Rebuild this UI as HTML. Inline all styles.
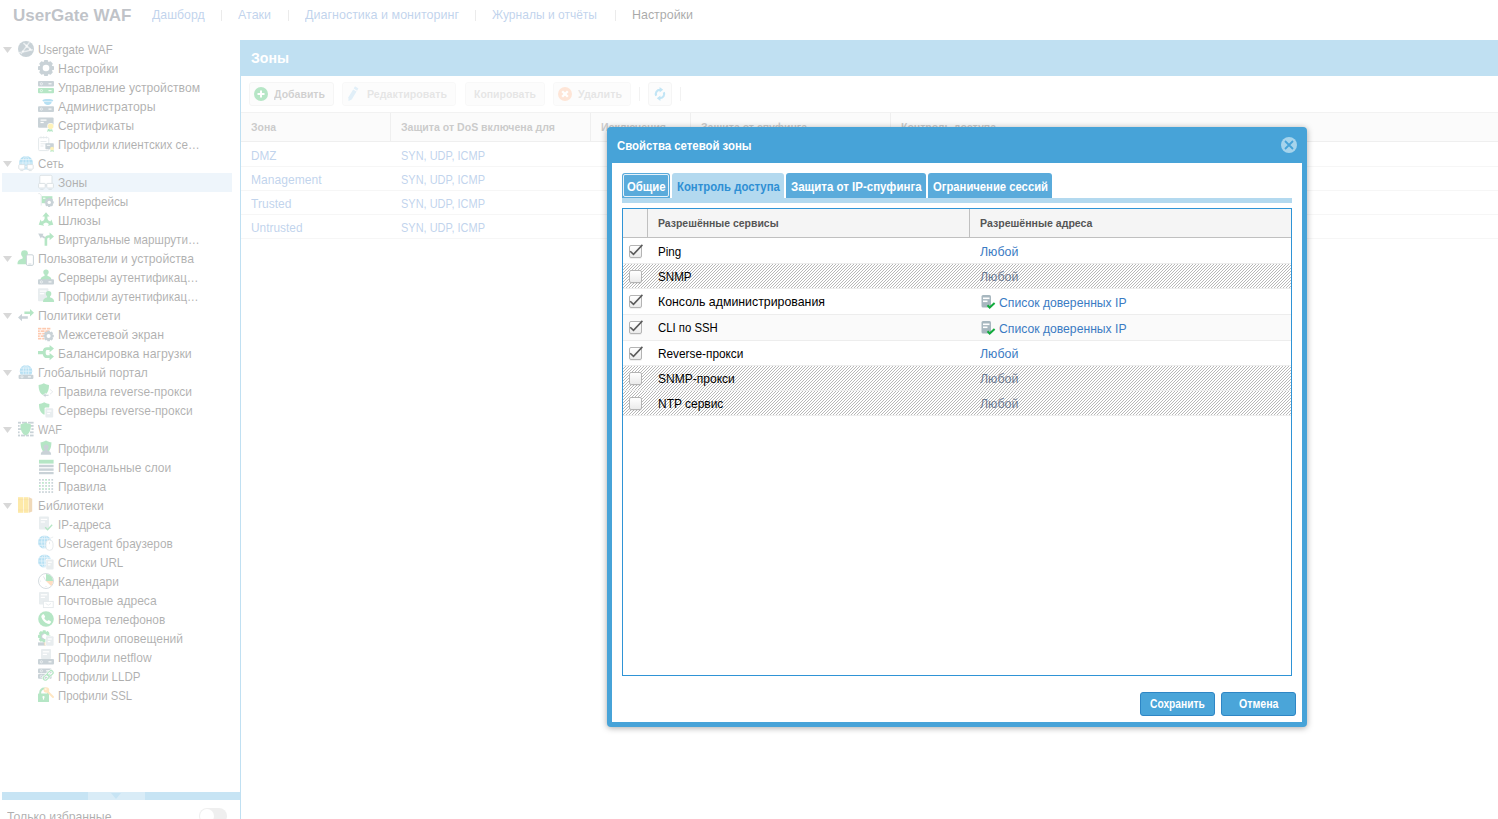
<!DOCTYPE html>
<html lang="ru"><head><meta charset="utf-8"><title>UserGate WAF</title>
<style>
html,body{margin:0;padding:0;background:#fff;overflow:hidden}
body{width:1498px;height:819px;position:relative;font-family:"Liberation Sans",sans-serif}
#app,#win{position:absolute;left:0;top:0;width:1498px;height:819px;overflow:hidden}
#mask{position:absolute;left:0;top:0;width:1498px;height:819px;background:rgba(255,255,255,.66)}
.t{position:absolute;transform-origin:0 0;white-space:pre;line-height:20px;height:20px;display:block;font-family:"Liberation Sans",sans-serif}
.b{position:absolute;box-sizing:border-box}
svg{position:absolute;overflow:visible}

</style></head>
<body>
<div id="app">
<div class="b" style="left:221px;top:10px;width:1px;height:11px;background:#c4c4c4"></div><div class="b" style="left:288px;top:10px;width:1px;height:11px;background:#c4c4c4"></div><div class="b" style="left:475px;top:10px;width:1px;height:11px;background:#c4c4c4"></div><div class="b" style="left:615px;top:10px;width:1px;height:11px;background:#c4c4c4"></div><svg style="left:3px;top:47px" width="9" height="6" viewBox="0 0 9 6"><path d="M0 0h9L4.5 6z" fill="#8c8c8c"/></svg><svg style="left:18px;top:41px" width="16" height="16" viewBox="0 0 16 16"><circle cx="8" cy="8" r="8" fill="#607d8b"/><g stroke="#fff" stroke-width="1.4" opacity=".62" fill="none" stroke-linecap="round"><path d="M11.2 1.600L3.200 12.600M5.800 2.400L13.800 9.400M1.600 11.400C6 10.800 10 10 14.200 8.600"/></g><g fill="#fff" opacity=".75"><circle cx="8.600" cy="5" r="1.200"/><circle cx="12" cy="8.600" r="1.100"/><circle cx="4.800" cy="10.600" r="1.100"/></g></svg><svg style="left:38px;top:60px" width="16" height="16" viewBox="0 0 16 16"><g fill="#607d8b"><rect x="5.92" y="0.00" width="4.16" height="3.72" rx="0.88" transform="rotate(0.0 8 8)"/><rect x="5.92" y="0.00" width="4.16" height="3.72" rx="0.88" transform="rotate(45.0 8 8)"/><rect x="5.92" y="0.00" width="4.16" height="3.72" rx="0.88" transform="rotate(90.0 8 8)"/><rect x="5.92" y="0.00" width="4.16" height="3.72" rx="0.88" transform="rotate(135.0 8 8)"/><rect x="5.92" y="0.00" width="4.16" height="3.72" rx="0.88" transform="rotate(180.0 8 8)"/><rect x="5.92" y="0.00" width="4.16" height="3.72" rx="0.88" transform="rotate(225.0 8 8)"/><rect x="5.92" y="0.00" width="4.16" height="3.72" rx="0.88" transform="rotate(270.0 8 8)"/><rect x="5.92" y="0.00" width="4.16" height="3.72" rx="0.88" transform="rotate(315.0 8 8)"/><circle cx="8" cy="8" r="6.64"/></g><circle cx="8" cy="8" r="3.30" fill="#fff"/></svg><svg style="left:38px;top:79px" width="16" height="16" viewBox="0 0 16 16"><rect x="0" y="2" width="16" height="5.6" rx="1" fill="#607d8b"/><circle cx="3.4" cy="4.8" r="1.1" fill="none" stroke="#fff" stroke-width=".7" opacity=".8"/><rect x="10.5" y="4.2" width="3" height="1.2" fill="#fff" opacity=".85"/><rect x="0" y="8.9" width="16" height="5.4" rx="1" fill="#27b655"/><circle cx="3.4" cy="11.600000000000001" r="1.1" fill="none" stroke="#fff" stroke-width=".7" opacity=".8"/><rect x="10.5" y="11.000000000000002" width="3" height="1.2" fill="#fff" opacity=".85"/></svg><svg style="left:38px;top:98px" width="16" height="16" viewBox="0 0 16 16"><path d="M4.3 2.2C6 0.6 13.6 0.6 15.3 2.2L14.4 3.6H5.2z" fill="#29a3dc"/><path d="M6 3.9h7.6c0 1.6-1.4 3-3.8 3s-3.8-1.4-3.8-3z" fill="#29a3dc"/><rect x="0" y="8.3" width="16" height="5.6" rx="1" fill="#607d8b"/><circle cx="3.4" cy="11.100000000000001" r="1.1" fill="none" stroke="#fff" stroke-width=".7" opacity=".8"/><rect x="10.5" y="10.500000000000002" width="3" height="1.2" fill="#fff" opacity=".85"/></svg><svg style="left:38px;top:117px" width="16" height="16" viewBox="0 0 16 16"><rect x="0" y="0.4" width="15.6" height="10.4" rx="1" fill="#607d8b"/><rect x="2.5" y="2.5" width="6" height="1.2" fill="#fff"/><rect x="2.5" y="4.9" width="3.2" height="1.2" fill="#fff"/><path d="M10.2 11l-1.200 4 2-1 1 .9.800-.9 2.200 1-1.200-4z" fill="#27b655"/><circle cx="12.6" cy="9.3" r="3.3" fill="#fff"/><circle cx="12.6" cy="9.3" r="2.8" fill="#fdd835"/></svg><svg style="left:38px;top:136px" width="16" height="16" viewBox="0 0 16 16"><rect x="0.6" y="1.6" width="10.2" height="13" rx="1" fill="#fff" stroke="#b0bec5" stroke-width="1"/><path d="M3 0.4v2M5.7 0.4v2M8.4 0.4v2" stroke="#b0bec5" stroke-width="1"/><path d="M2.5 5.5h6M2.5 7.8h6M2.5 10h3" stroke="#b0bec5" stroke-width=".9"/><rect x="7.4" y="7.3" width="8.4" height="6" rx=".8" fill="#607d8b"/><rect x="8.8" y="8.8" width="3.4" height=".9" fill="#fff"/><path d="M12.8 13.5l-.5 2.5 1.8-.7 1.8.7-.5-2.5z" fill="#27b655"/><circle cx="14.1" cy="12.6" r="1.9" fill="#fdd835"/></svg><svg style="left:3px;top:161px" width="9" height="6" viewBox="0 0 9 6"><path d="M0 0h9L4.5 6z" fill="#8c8c8c"/></svg><svg style="left:18px;top:155px" width="16" height="16" viewBox="0 0 16 16"><circle cx="8" cy="8" r="7" fill="#29a3dc"/><g stroke="#fff" stroke-width=".7" fill="none" opacity=".75"><ellipse cx="8" cy="8" rx="3.15" ry="7"/><path d="M8 1v14M1 8h14M1.91 4.50h12.18M1.91 11.50h12.18"/></g><rect x="0.8" y="9.6" width="6" height="4.6" rx=".8" fill="#fff" stroke="#90a4ae" stroke-width="0.9"/><path d="M2.30 15.6h3.00" stroke="#90a4ae" stroke-width="0.9"/><rect x="9.2" y="9.6" width="6" height="4.6" rx=".8" fill="#fff" stroke="#90a4ae" stroke-width="0.9"/><path d="M10.70 15.6h3.00" stroke="#90a4ae" stroke-width="0.9"/></svg><div class="b" style="left:2px;top:173px;width:230px;height:19px;background:#cde2f3"></div><svg style="left:38px;top:174px" width="16" height="16" viewBox="0 0 16 16"><rect x="1.8" y="1.3" width="12.2" height="9" rx="1.2" fill="#fff" stroke="#90a4ae" stroke-width=".9"/><rect x="0.6" y="9.4" width="6.6" height="4.6" rx=".8" fill="#fff" stroke="#90a4ae" stroke-width="0.9"/><path d="M2.25 15.4h3.30" stroke="#90a4ae" stroke-width="0.9"/><rect x="8.8" y="9.4" width="6.6" height="4.6" rx=".8" fill="#fff" stroke="#90a4ae" stroke-width="0.9"/><path d="M10.45 15.4h3.30" stroke="#90a4ae" stroke-width="0.9"/><path d="M7.2 11.7h1.6" stroke="#90a4ae" stroke-width=".9"/></svg><svg style="left:38px;top:193px" width="16" height="16" viewBox="0 0 16 16"><path d="M0.3 0.6h1.6l1.3 1.6v10.4" fill="none" stroke="#b0bec5" stroke-width=".9"/><rect x="3.8" y="3.2" width="10.6" height="7" fill="#27b655"/><rect x="5" y="4.6" width="2.4" height="1.4" fill="#fff" opacity=".7"/><g fill="#607d8b"><rect x="10.00" y="4.80" width="2.39" height="2.56" rx="0.51" transform="rotate(0.0 11.2 9.4)"/><rect x="10.00" y="4.80" width="2.39" height="2.56" rx="0.51" transform="rotate(45.0 11.2 9.4)"/><rect x="10.00" y="4.80" width="2.39" height="2.56" rx="0.51" transform="rotate(90.0 11.2 9.4)"/><rect x="10.00" y="4.80" width="2.39" height="2.56" rx="0.51" transform="rotate(135.0 11.2 9.4)"/><rect x="10.00" y="4.80" width="2.39" height="2.56" rx="0.51" transform="rotate(180.0 11.2 9.4)"/><rect x="10.00" y="4.80" width="2.39" height="2.56" rx="0.51" transform="rotate(225.0 11.2 9.4)"/><rect x="10.00" y="4.80" width="2.39" height="2.56" rx="0.51" transform="rotate(270.0 11.2 9.4)"/><rect x="10.00" y="4.80" width="2.39" height="2.56" rx="0.51" transform="rotate(315.0 11.2 9.4)"/><circle cx="11.2" cy="9.4" r="3.82"/></g><circle cx="11.2" cy="9.4" r="1.70" fill="#fff"/></svg><svg style="left:38px;top:212px" width="16" height="16" viewBox="0 0 16 16"><g fill="#27b655"><path d="M8 0.200l3.600 4.200h-2.200v4.400h-2.800V4.400H4.400z"/><g transform="rotate(120 8 8.600)"><path d="M8 0.200l3.600 4.200h-2.200v4.400h-2.800V4.400H4.400z"/></g><g transform="rotate(240 8 8.600)"><path d="M8 0.200l3.600 4.200h-2.200v4.400h-2.800V4.400H4.400z"/></g><circle cx="8" cy="8.600" r="2"/></g></svg><svg style="left:38px;top:231px" width="16" height="16" viewBox="0 0 16 16"><path d="M6.600 14.800V8.400c0-2.600 1.600-4.200 4.200-4.200h.800V1.600l4.400 3.800-4.400 3.800V6.800h-.800c-1.100 0-1.600.5-1.600 1.600v6.400z" fill="#27b655"/><path d="M6.400 7.800L3.800 6l-1 1.500L.2 2.600l5.400.200-1 1.500 2.800 1.900z" fill="#607d8b"/></svg><svg style="left:3px;top:256px" width="9" height="6" viewBox="0 0 9 6"><path d="M0 0h9L4.5 6z" fill="#8c8c8c"/></svg><svg style="left:18px;top:250px" width="16" height="16" viewBox="0 0 16 16"><circle cx="6.5" cy="3.6999999999999997" r="3.4" fill="#27b655"/><path d="M4.63 6.08h3.74v2.38c4.42 1.02 5.10 3.06 5.10 5.78h-13.94c0 -2.72 0.68 -4.76 5.10 -5.78z" fill="#27b655"/><rect x="8.4" y="4.8" width="7" height="10.6" rx="1.3" fill="#fff" stroke="#607d8b" stroke-width="1"/><path d="M10.4 14h3" stroke="#607d8b" stroke-width=".8"/></svg><svg style="left:38px;top:269px" width="16" height="16" viewBox="0 0 16 16"><circle cx="8" cy="3.1" r="2.7" fill="#27b655"/><path d="M6.51 4.99h2.97v1.89c3.51 0.81 4.05 2.43 4.05 4.59h-11.07c0 -2.16 0.54 -3.78 4.05 -4.59z" fill="#27b655"/><rect x="0" y="10.2" width="16" height="5.4" rx="1" fill="#607d8b"/><circle cx="3.4" cy="12.899999999999999" r="1.1" fill="none" stroke="#fff" stroke-width=".7" opacity=".8"/><rect x="10.5" y="12.299999999999999" width="3" height="1.2" fill="#fff" opacity=".85"/></svg><svg style="left:38px;top:288px" width="16" height="16" viewBox="0 0 16 16"><rect x="0" y="0.3" width="10.4" height="13" rx="1" fill="#bcc9cf"/><rect x="1.8" y="2.5" width="6.800000000000001" height="1.2" fill="#fff"/><rect x="1.8" y="5.1" width="4.42" height="1.2" fill="#fff"/><circle cx="10.6" cy="5.7" r="2.7" fill="#27b655"/><path d="M9.11 7.59h2.97v1.89c3.51 0.81 4.05 2.43 4.05 4.59h-11.07c0 -2.16 0.54 -3.78 4.05 -4.59z" fill="#27b655"/></svg><svg style="left:3px;top:313px" width="9" height="6" viewBox="0 0 9 6"><path d="M0 0h9L4.5 6z" fill="#8c8c8c"/></svg><svg style="left:18px;top:307px" width="16" height="16" viewBox="0 0 16 16"><path d="M6.400 4.400h5.600V2l4 3.700-4 3.700V7H6.400z" fill="#27b655"/><path d="M9.800 9.200H4V6.800L0 10.500l4 3.700v-2.400h5.800z" fill="#607d8b"/></svg><svg style="left:38px;top:326px" width="16" height="16" viewBox="0 0 16 16"><g fill="#f9631a" transform="translate(0 1.2)"><rect x="0" y="0.6" width="3.4" height="1.7"/><rect x="4.2" y="0.6" width="4" height="1.7"/><rect x="9" y="0.6" width="3.4" height="1.7"/><rect x="0" y="3.1" width="1.8" height="1.7"/><rect x="2.6" y="3.1" width="4" height="1.7"/><rect x="7.4" y="3.1" width="4" height="1.7"/><rect x="0" y="5.6" width="3.4" height="1.7"/><rect x="4.2" y="5.6" width="3" height="1.7"/><rect x="0" y="8.1" width="1.8" height="1.7"/><rect x="2.6" y="8.1" width="3" height="1.7"/><rect x="0" y="10.6" width="3.4" height="1.7"/><rect x="4.2" y="10.6" width="2" height="1.7"/></g><g fill="#607d8b"><rect x="9.25" y="4.80" width="2.70" height="2.77" rx="0.57" transform="rotate(0.0 10.6 10)"/><rect x="9.25" y="4.80" width="2.70" height="2.77" rx="0.57" transform="rotate(45.0 10.6 10)"/><rect x="9.25" y="4.80" width="2.70" height="2.77" rx="0.57" transform="rotate(90.0 10.6 10)"/><rect x="9.25" y="4.80" width="2.70" height="2.77" rx="0.57" transform="rotate(135.0 10.6 10)"/><rect x="9.25" y="4.80" width="2.70" height="2.77" rx="0.57" transform="rotate(180.0 10.6 10)"/><rect x="9.25" y="4.80" width="2.70" height="2.77" rx="0.57" transform="rotate(225.0 10.6 10)"/><rect x="9.25" y="4.80" width="2.70" height="2.77" rx="0.57" transform="rotate(270.0 10.6 10)"/><rect x="9.25" y="4.80" width="2.70" height="2.77" rx="0.57" transform="rotate(315.0 10.6 10)"/><circle cx="10.6" cy="10" r="4.32"/></g><circle cx="10.6" cy="10" r="2.00" fill="#fff"/></svg><svg style="left:38px;top:345px" width="16" height="16" viewBox="0 0 16 16"><path d="M0 6h4.800C5.200 3 6.800 2.200 9 2.200h2.600V0l4.400 3.600-4.400 3.600V5H9.200c-.9 0-1.500.6-1.500 2.600s.6 2.600 1.500 2.600h2.400V8l4.400 3.600-4.400 3.600V13H9c-2.200 0-3.800-.8-4.200-3.800H0z" fill="#27b655"/></svg><svg style="left:3px;top:370px" width="9" height="6" viewBox="0 0 9 6"><path d="M0 0h9L4.5 6z" fill="#8c8c8c"/></svg><svg style="left:18px;top:364px" width="16" height="16" viewBox="0 0 16 16"><circle cx="8" cy="7.2" r="6.2" fill="#29a3dc"/><g stroke="#fff" stroke-width=".7" fill="none" opacity=".75"><ellipse cx="8" cy="7.2" rx="2.79" ry="6.2"/><path d="M8 1.0v12.4M1.7999999999999998 7.2h12.4M2.61 4.10h10.79M2.61 10.30h10.79"/></g><rect x="0.6" y="10.7" width="14.8" height="4.3" rx="1" fill="#607d8b"/><circle cx="4.0" cy="12.85" r="1.1" fill="none" stroke="#fff" stroke-width=".7" opacity=".8"/><rect x="9.9" y="12.25" width="3" height="1.2" fill="#fff" opacity=".85"/></svg><svg style="left:38px;top:383px" width="16" height="16" viewBox="0 0 16 16"><path d="M5.8 0.2c2.08 1.24 3.64 1.49 5.2 1.74c0 5.58 -1.56 8.68 -5.2 10.66c-3.64 -1.98 -5.2 -5.08 -5.2 -10.66c1.56 -0.25 3.12 -0.50 5.2 -1.74z" fill="#27b655"/><path d="M4.800 12.300l3-2.200v1.400h3v1.600h-3v1.400z" fill="#607d8b" stroke="#fff" stroke-width=".5"/><path d="M12 6.400l2.800 2.400-2.800 2.400" fill="none" stroke="#b0bec5" stroke-width=".9"/></svg><svg style="left:38px;top:402px" width="16" height="16" viewBox="0 0 16 16"><path d="M6.2 0.2c2.08 1.26 3.64 1.51 5.2 1.76c0 5.67 -1.56 8.82 -5.2 10.84c-3.64 -2.02 -5.2 -5.17 -5.2 -10.84c1.56 -0.25 3.12 -0.50 5.2 -1.76z" fill="#27b655"/><rect x="6.600" y="5.600" width="9" height="10" rx="1" fill="#fff"/><rect x="7.4" y="6.2" width="7.8" height="9.4" rx="1" fill="#bcc9cf"/><rect x="9.200000000000001" y="8.4" width="4.199999999999999" height="1.2" fill="#fff"/><rect x="9.200000000000001" y="11.0" width="2.73" height="1.2" fill="#fff"/></svg><svg style="left:3px;top:427px" width="9" height="6" viewBox="0 0 9 6"><path d="M0 0h9L4.5 6z" fill="#8c8c8c"/></svg><svg style="left:18px;top:421px" width="16" height="16" viewBox="0 0 16 16"><g fill="#607d8b"><rect x="0" y="0.8" width="3" height="1.8"/><rect x="4" y="0.8" width="5" height="1.8"/><rect x="10" y="0.8" width="5.600" height="1.8"/><rect x="0" y="4" width="1.6" height="1.8"/><rect x="12.600" y="4" width="3" height="1.8"/><rect x="0" y="7.200" width="3" height="1.8"/><rect x="13.400" y="7.200" width="2.200" height="1.8"/><rect x="0" y="10.400" width="1.6" height="1.8"/><rect x="12" y="10.400" width="3.600" height="1.8"/><rect x="0" y="13.600" width="2" height="1.8"/><rect x="3" y="13.600" width="4" height="1.8"/><rect x="8" y="13.600" width="3" height="1.8"/><rect x="12" y="13.600" width="3.600" height="1.8"/></g><path d="M7.699999999999999 1.6c2.12 1.30 3.71 1.56 5.3 1.82c0 5.85 -1.59 9.10 -5.3 11.18c-3.71 -2.08 -5.3 -5.33 -5.3 -11.18c1.59 -0.26 3.18 -0.52 5.3 -1.82z" fill="#27b655"/></svg><svg style="left:38px;top:440px" width="16" height="16" viewBox="0 0 16 16"><path d="M8.0 0.4c2.16 1.32 3.78 1.58 5.4 1.85c0 5.94 -1.62 9.24 -5.4 11.35c-3.78 -2.11 -5.4 -5.41 -5.4 -11.35c1.62 -0.26 3.24 -0.53 5.4 -1.85z" fill="#27b655"/><circle cx="8" cy="7.1" r="2.5" fill="#607d8b"/><path d="M6.62 8.85h2.75v1.75c3.25 0.75 3.75 2.25 3.75 4.25h-10.25c0 -2.00 0.50 -3.50 3.75 -4.25z" fill="#607d8b"/></svg><svg style="left:38px;top:459px" width="16" height="16" viewBox="0 0 16 16"><rect x="1" y="0.8" width="14.6" height="3.800" fill="#27b655"/><rect x="1" y="5.800" width="14.600" height="2.400" fill="#607d8b"/><rect x="1" y="9.400" width="14.600" height="2.400" fill="#607d8b"/><rect x="1" y="13" width="14.600" height="2.200" fill="#607d8b"/></svg><svg style="left:38px;top:478px" width="16" height="16" viewBox="0 0 16 16"><rect x="1.00" y="1.00" width="1.7" height="1.7" fill="#607d8b"/><rect x="4.10" y="1.00" width="1.7" height="1.7" fill="#607d8b"/><rect x="7.20" y="1.00" width="1.7" height="1.7" fill="#27b655"/><rect x="10.30" y="1.00" width="1.7" height="1.7" fill="#607d8b"/><rect x="13.40" y="1.00" width="1.7" height="1.7" fill="#607d8b"/><rect x="1.00" y="4.05" width="1.7" height="1.7" fill="#607d8b"/><rect x="4.10" y="4.05" width="1.7" height="1.7" fill="#27b655"/><rect x="7.20" y="4.05" width="1.7" height="1.7" fill="#607d8b"/><rect x="10.30" y="4.05" width="1.7" height="1.7" fill="#27b655"/><rect x="13.40" y="4.05" width="1.7" height="1.7" fill="#607d8b"/><rect x="1.00" y="7.10" width="1.7" height="1.7" fill="#27b655"/><rect x="4.10" y="7.10" width="1.7" height="1.7" fill="#607d8b"/><rect x="7.20" y="7.10" width="1.7" height="1.7" fill="#27b655"/><rect x="10.30" y="7.10" width="1.7" height="1.7" fill="#607d8b"/><rect x="13.40" y="7.10" width="1.7" height="1.7" fill="#607d8b"/><rect x="1.00" y="10.15" width="1.7" height="1.7" fill="#607d8b"/><rect x="4.10" y="10.15" width="1.7" height="1.7" fill="#27b655"/><rect x="7.20" y="10.15" width="1.7" height="1.7" fill="#607d8b"/><rect x="10.30" y="10.15" width="1.7" height="1.7" fill="#27b655"/><rect x="13.40" y="10.15" width="1.7" height="1.7" fill="#607d8b"/><rect x="1.00" y="13.20" width="1.7" height="1.7" fill="#607d8b"/><rect x="4.10" y="13.20" width="1.7" height="1.7" fill="#607d8b"/><rect x="7.20" y="13.20" width="1.7" height="1.7" fill="#607d8b"/><rect x="10.30" y="13.20" width="1.7" height="1.7" fill="#607d8b"/><rect x="13.40" y="13.20" width="1.7" height="1.7" fill="#607d8b"/></svg><svg style="left:3px;top:503px" width="9" height="6" viewBox="0 0 9 6"><path d="M0 0h9L4.5 6z" fill="#8c8c8c"/></svg><svg style="left:18px;top:497px" width="16" height="16" viewBox="0 0 16 16"><rect x="0" y="0.200" width="5" height="15.600" fill="#f9be00"/><rect x="5.600" y="0.200" width="5" height="15.600" fill="#f9be00"/><path d="M11 0.200l3.200 1.600v12.600l-3.200 1.400z" fill="#d39134"/><path d="M0 2.600h5M0 13h5M5.600 2.600h5M5.600 13h5" stroke="#e0a000" stroke-width=".6"/></svg><svg style="left:38px;top:516px" width="16" height="16" viewBox="0 0 16 16"><rect x="1" y="0.6" width="10" height="13" rx="1" fill="#bcc9cf"/><rect x="2.8" y="2.8000000000000003" width="6.4" height="1.2" fill="#fff"/><rect x="2.8" y="5.3999999999999995" width="4.16" height="1.2" fill="#fff"/><path d="M7.200 11.200l2.400 2.600 4.600-5" fill="none" stroke="#27b655" stroke-width="1.300"/></svg><svg style="left:38px;top:535px" width="16" height="16" viewBox="0 0 16 16"><circle cx="6.6" cy="7" r="6.6" fill="#29a3dc"/><g stroke="#fff" stroke-width=".7" fill="none" opacity=".75"><ellipse cx="6.6" cy="7" rx="2.97" ry="6.6"/><path d="M6.6 0.40000000000000036v13.2M0.0 7h13.2M0.86 3.70h11.48M0.86 10.30h11.48"/></g><path d="M11.400 4.800c0-1.600 1.600-2 3.800-2.800" fill="none" stroke="#b0bec5" stroke-width=".8"/><rect x="8" y="5" width="7" height="10.400" rx="3.500" fill="#fff" stroke="#b0bec5" stroke-width=".9"/><path d="M11.500 6.800v2.400" stroke="#b0bec5" stroke-width=".9"/></svg><svg style="left:38px;top:554px" width="16" height="16" viewBox="0 0 16 16"><circle cx="6.6" cy="7" r="6.6" fill="#29a3dc"/><g stroke="#fff" stroke-width=".7" fill="none" opacity=".75"><ellipse cx="6.6" cy="7" rx="2.97" ry="6.6"/><path d="M6.6 0.40000000000000036v13.2M0.0 7h13.2M0.86 3.70h11.48M0.86 10.30h11.48"/></g><rect x="7.600" y="4.800" width="8.400" height="11" rx="1" fill="#fff"/><rect x="8.2" y="5.4" width="7.4" height="10.2" rx="1" fill="#bcc9cf"/><rect x="10.0" y="7.6000000000000005" width="3.8000000000000003" height="1.2" fill="#fff"/><rect x="10.0" y="10.2" width="2.47" height="1.2" fill="#fff"/></svg><svg style="left:38px;top:573px" width="16" height="16" viewBox="0 0 16 16"><circle cx="8" cy="8" r="7.500" fill="#fff" stroke="#78909c" stroke-width=".9"/><path d="M8 8V0.900A7.100 7.100 0 0 1 15.100 8z" fill="#27b655"/><path d="M8 8h7.100a7.100 7.100 0 0 1-2 4.900z" fill="#ff9d4d"/><path d="M8 8L5.400 3.400" stroke="#90a4ae" stroke-width=".8"/><g fill="#90a4ae"><circle cx="2.600" cy="8" r=".5"/><circle cx="8" cy="13.400" r=".5"/></g></svg><svg style="left:38px;top:592px" width="16" height="16" viewBox="0 0 16 16"><rect x="1" y="0" width="10" height="12.6" rx="1" fill="#bcc9cf"/><rect x="2.8" y="2.2" width="6.4" height="1.2" fill="#fff"/><rect x="2.8" y="4.8" width="4.16" height="1.2" fill="#fff"/><rect x="5.400" y="9.400" width="9.800" height="6.200" fill="#fff" stroke="#b0bec5" stroke-width=".9"/><path d="M7.600 11.400l2.700 1.800 2.700-1.800" fill="none" stroke="#b0bec5" stroke-width=".8"/></svg><svg style="left:38px;top:611px" width="16" height="16" viewBox="0 0 16 16"><circle cx="8" cy="8" r="7.800" fill="#27b655"/><path d="M4.600 3.600c.5-.5 1.200-.5 1.500.100l.9 1.600c.2.400.1.800-.2 1.100l-.6.600c.7 1.500 1.600 2.400 3.100 3.100l.6-.6c.3-.3.700-.4 1.100-.2l1.600.9c.6.300.6 1 .100 1.500l-.7.700c-.6.600-1.500.7-2.300.4C6.600 11.600 4.500 9.500 3.500 6.600c-.3-.800-.2-1.700.4-2.300z" fill="#fff"/></svg><svg style="left:38px;top:630px" width="16" height="16" viewBox="0 0 16 16"><g fill="#27b655"><rect x="4.59" y="0.20" width="3.22" height="3.11" rx="0.68" transform="rotate(0.0 6.2 6.4)"/><rect x="4.59" y="0.20" width="3.22" height="3.11" rx="0.68" transform="rotate(45.0 6.2 6.4)"/><rect x="4.59" y="0.20" width="3.22" height="3.11" rx="0.68" transform="rotate(90.0 6.2 6.4)"/><rect x="4.59" y="0.20" width="3.22" height="3.11" rx="0.68" transform="rotate(135.0 6.2 6.4)"/><rect x="4.59" y="0.20" width="3.22" height="3.11" rx="0.68" transform="rotate(180.0 6.2 6.4)"/><rect x="4.59" y="0.20" width="3.22" height="3.11" rx="0.68" transform="rotate(225.0 6.2 6.4)"/><rect x="4.59" y="0.20" width="3.22" height="3.11" rx="0.68" transform="rotate(270.0 6.2 6.4)"/><rect x="4.59" y="0.20" width="3.22" height="3.11" rx="0.68" transform="rotate(315.0 6.2 6.4)"/><circle cx="6.2" cy="6.4" r="5.15"/></g><circle cx="6.2" cy="6.4" r="2.60" fill="#fff"/><path d="M6.200 3.800a2.600 2.600 0 0 0 0 5.200" fill="none" stroke="#607d8b" stroke-width="1.100"/><rect x="0" y="12.400" width="8" height="3.200" fill="#607d8b"/><rect x="6.400" y="12.400" width="1.600" height="3.200" fill="#ffb74d"/><rect x="7.400" y="5.600" width="8.400" height="10.400" rx="1" fill="#fff"/><rect x="8" y="6.2" width="7.6" height="9.6" rx="1" fill="#bcc9cf"/><rect x="9.8" y="8.4" width="3.9999999999999996" height="1.2" fill="#fff"/><rect x="9.8" y="11.0" width="2.60" height="1.2" fill="#fff"/></svg><svg style="left:38px;top:649px" width="16" height="16" viewBox="0 0 16 16"><rect x="3" y="0" width="10" height="10" rx="1" fill="#bcc9cf"/><rect x="4.8" y="2.2" width="6.4" height="1.2" fill="#fff"/><rect x="4.8" y="4.8" width="4.16" height="1.2" fill="#fff"/><rect x="0" y="10" width="16" height="5.6" rx="1" fill="#607d8b"/><circle cx="3.4" cy="12.8" r="1.1" fill="none" stroke="#fff" stroke-width=".7" opacity=".8"/><rect x="10.5" y="12.200000000000001" width="3" height="1.2" fill="#fff" opacity=".85"/></svg><svg style="left:38px;top:668px" width="16" height="16" viewBox="0 0 16 16"><rect x="0" y="0.4" width="13.6" height="4.8" rx="1" fill="#607d8b"/><circle cx="3.4" cy="2.8" r="1.1" fill="none" stroke="#fff" stroke-width=".7" opacity=".8"/><rect x="8.1" y="2.1999999999999997" width="3" height="1.2" fill="#fff" opacity=".85"/><rect x="0" y="6" width="13.6" height="4.8" rx="1" fill="#607d8b"/><circle cx="3.4" cy="8.4" r="1.1" fill="none" stroke="#fff" stroke-width=".7" opacity=".8"/><rect x="8.1" y="7.800000000000001" width="3" height="1.2" fill="#fff" opacity=".85"/><g fill="none" stroke="#fff" stroke-width="2.2"><rect x="9" y="3.400" width="6.400" height="4" rx="2" transform="rotate(-40 12.2 5.4)"/><rect x="5" y="7.400" width="6.400" height="4" rx="2" transform="rotate(-40 8.2 9.4)"/></g><g fill="none" stroke="#27b655" stroke-width="1.200"><rect x="9" y="3.400" width="6.400" height="4" rx="2" transform="rotate(-40 12.2 5.4)"/><rect x="5" y="7.400" width="6.400" height="4" rx="2" transform="rotate(-40 8.2 9.4)"/></g></svg><svg style="left:38px;top:687px" width="16" height="16" viewBox="0 0 16 16"><path d="M2.200 7V5.600a4 4 0 0 1 8 0V7" fill="none" stroke="#27b655" stroke-width="2"/><rect x="0" y="6.600" width="11" height="8.400" rx=".6" fill="#27b655"/><circle cx="5.500" cy="10" r="1.100" fill="#fff"/><rect x="4.900" y="10" width="1.200" height="2.600" fill="#fff"/><circle cx="8.400" cy="3" r="2.800" fill="#ffb74d"/><path d="M9.600 4.600l5.400 5.400" stroke="#ffb74d" stroke-width="2" stroke-linecap="round"/><circle cx="7.600" cy="2.200" r="1" fill="#fff" opacity=".6"/></svg><div class="b" style="left:240px;top:40px;width:1px;height:779px;background:#47a3d8"></div><div class="b" style="left:2px;top:792px;width:238px;height:8px;background:#5bb0df"></div><div class="b" style="left:88px;top:792px;width:57px;height:8px;background:#8fc8e8"></div><svg style="left:111px;top:793px" width="10" height="6" viewBox="0 0 10 6"><path d="M0 0h10L5 6z" fill="#5bb0df"/></svg><div class="b" style="left:199px;top:808px;width:28px;height:16px;border-radius:8px;background:#d0d0d0"></div><div class="b" style="left:200px;top:809px;width:14px;height:14px;border-radius:7px;background:#fff"></div><div class="b" style="left:240px;top:40px;width:1258px;height:36px;background:#47a3d8"></div><div class="b" style="left:249px;top:82px;width:85px;height:24px;border:1px solid #e0e0e0;border-radius:3px;background:#f7f7f7"></div><div class="b" style="left:342px;top:82px;width:114px;height:24px;border:1px solid #ebebeb;border-radius:3px;background:#f7f7f7"></div><div class="b" style="left:465px;top:82px;width:80px;height:24px;border:1px solid #ebebeb;border-radius:3px;background:#f7f7f7"></div><div class="b" style="left:553px;top:82px;width:78px;height:24px;border:1px solid #ebebeb;border-radius:3px;background:#f7f7f7"></div><div class="b" style="left:648px;top:82px;width:24px;height:24px;border:1px solid #e0e0e0;border-radius:3px;background:#f7f7f7"></div><div class="b" style="left:639px;top:87px;width:1px;height:14px;background:#d8d8d8"></div><div class="b" style="left:680px;top:87px;width:1px;height:14px;background:#d8d8d8"></div><svg style="left:254px;top:87px" width="14" height="14" viewBox="0 0 14 14"><circle cx="7" cy="7" r="7" fill="#2bb55a"/><path d="M7 3.5v7M3.5 7h7" stroke="#fff" stroke-width="2"/></svg><svg style="left:346px;top:86px" width="14" height="16" viewBox="0 0 14 16"><path d="M2.5 14.9L2.35 11.3 7.15 3.44 10.57 5.52 5.77 13.38z" fill="#a7d0ea"/><path d="M7.67 2.59L9.02 0.37 12.44 2.45 11.09 4.67z" fill="#a7d0ea"/></svg><svg style="left:558px;top:87px" width="14" height="14" viewBox="0 0 14 14"><circle cx="7" cy="7" r="7" fill="#fbb48a"/><path d="M4.2 4.2l5.600 5.600M9.800 4.200l-5.600 5.600" stroke="#fff" stroke-width="2.300"/></svg><svg style="left:653px;top:87px" width="14" height="14" viewBox="0 0 14 14"><g fill="none" stroke="#4db3e2" stroke-width="2.200"><path d="M7 2.800A4.200 4.200 0 0 0 3.200 8.800"/><path d="M7 11.200A4.200 4.200 0 0 0 10.800 5.200"/></g><path d="M6.600 0l3.600 2.800-3.600 2.800zM7.400 14l-3.600-2.800 3.600-2.800z" fill="#4db3e2"/></svg><div class="b" style="left:241px;top:112px;width:1257px;height:30px;background:#f2f2f2;border-top:1px solid #d8d8d8;border-bottom:1px solid #d0d0d0"></div><div class="b" style="left:390px;top:113px;width:1px;height:28px;background:#d0d0d0"></div><div class="b" style="left:590px;top:113px;width:1px;height:28px;background:#d0d0d0"></div><div class="b" style="left:690px;top:113px;width:1px;height:28px;background:#d0d0d0"></div><div class="b" style="left:890px;top:113px;width:1px;height:28px;background:#d0d0d0"></div><div class="b" style="left:241px;top:166px;width:1257px;height:1px;background:#e4e4e4"></div><div class="b" style="left:241px;top:190px;width:1257px;height:1px;background:#e4e4e4"></div><div class="b" style="left:241px;top:214px;width:1257px;height:1px;background:#e4e4e4"></div><div class="b" style="left:241px;top:238px;width:1257px;height:1px;background:#e4e4e4"></div>
<span class="t" style="left:12.7px;top:5.81px;font-size:17px;font-weight:700;color:#46505f;transform:scaleX(1.0034);">UserGate WAF</span><span class="t" style="left:152px;top:4.50px;font-size:13px;font-weight:400;color:#4a80c8;transform:scaleX(0.9451);">Дашборд</span><span class="t" style="left:238px;top:4.50px;font-size:13px;font-weight:400;color:#4a80c8;transform:scaleX(0.9600);">Атаки</span><span class="t" style="left:305px;top:4.50px;font-size:13px;font-weight:400;color:#4a80c8;transform:scaleX(0.9630);">Диагностика и мониторинг</span><span class="t" style="left:492px;top:4.50px;font-size:13px;font-weight:400;color:#4a80c8;transform:scaleX(0.9254);">Журналы и отчёты</span><span class="t" style="left:632px;top:4.50px;font-size:13px;font-weight:400;color:#000;transform:scaleX(0.9569);">Настройки</span><span class="t" style="left:38.4px;top:39.50px;font-size:13px;font-weight:400;color:#161616;transform:scaleX(0.8813);">Usergate WAF</span><span class="t" style="left:58.4px;top:58.50px;font-size:13px;font-weight:400;color:#161616;transform:scaleX(0.9475);">Настройки</span><span class="t" style="left:58.4px;top:77.50px;font-size:13px;font-weight:400;color:#161616;transform:scaleX(0.9355);">Управление устройством</span><span class="t" style="left:58.4px;top:96.50px;font-size:13px;font-weight:400;color:#161616;transform:scaleX(0.9453);">Администраторы</span><span class="t" style="left:58.4px;top:115.50px;font-size:13px;font-weight:400;color:#161616;transform:scaleX(0.9162);">Сертификаты</span><span class="t" style="left:58.4px;top:134.50px;font-size:13px;font-weight:400;color:#161616;transform:scaleX(0.8995);">Профили клиентских се…</span><span class="t" style="left:38.4px;top:153.50px;font-size:13px;font-weight:400;color:#161616;transform:scaleX(0.8921);">Сеть</span><span class="t" style="left:58.4px;top:172.50px;font-size:13px;font-weight:400;color:#161616;transform:scaleX(0.9238);">Зоны</span><span class="t" style="left:58.4px;top:191.50px;font-size:13px;font-weight:400;color:#161616;transform:scaleX(0.9033);">Интерфейсы</span><span class="t" style="left:58.4px;top:210.50px;font-size:13px;font-weight:400;color:#161616;transform:scaleX(0.9582);">Шлюзы</span><span class="t" style="left:58.4px;top:229.50px;font-size:13px;font-weight:400;color:#161616;transform:scaleX(0.8966);">Виртуальные маршрути…</span><span class="t" style="left:38.4px;top:248.50px;font-size:13px;font-weight:400;color:#161616;transform:scaleX(0.9380);">Пользователи и устройства</span><span class="t" style="left:58.4px;top:267.50px;font-size:13px;font-weight:400;color:#161616;transform:scaleX(0.8969);">Серверы аутентификац…</span><span class="t" style="left:58.4px;top:286.50px;font-size:13px;font-weight:400;color:#161616;transform:scaleX(0.8845);">Профили аутентификац…</span><span class="t" style="left:38.4px;top:305.50px;font-size:13px;font-weight:400;color:#161616;transform:scaleX(0.9435);">Политики сети</span><span class="t" style="left:58.4px;top:324.50px;font-size:13px;font-weight:400;color:#161616;transform:scaleX(0.9471);">Межсетевой экран</span><span class="t" style="left:58.4px;top:343.50px;font-size:13px;font-weight:400;color:#161616;transform:scaleX(0.9459);">Балансировка нагрузки</span><span class="t" style="left:38.4px;top:362.50px;font-size:13px;font-weight:400;color:#161616;transform:scaleX(0.9208);">Глобальный портал</span><span class="t" style="left:58.4px;top:381.50px;font-size:13px;font-weight:400;color:#161616;transform:scaleX(0.9230);">Правила reverse-прокси</span><span class="t" style="left:58.4px;top:400.50px;font-size:13px;font-weight:400;color:#161616;transform:scaleX(0.9169);">Серверы reverse-прокси</span><span class="t" style="left:38.4px;top:419.50px;font-size:13px;font-weight:400;color:#161616;transform:scaleX(0.8449);">WAF</span><span class="t" style="left:58.4px;top:438.50px;font-size:13px;font-weight:400;color:#161616;transform:scaleX(0.8938);">Профили</span><span class="t" style="left:58.4px;top:457.50px;font-size:13px;font-weight:400;color:#161616;transform:scaleX(0.9237);">Персональные слои</span><span class="t" style="left:58.4px;top:476.50px;font-size:13px;font-weight:400;color:#161616;transform:scaleX(0.9129);">Правила</span><span class="t" style="left:38.4px;top:495.50px;font-size:13px;font-weight:400;color:#161616;transform:scaleX(0.9327);">Библиотеки</span><span class="t" style="left:58.4px;top:514.50px;font-size:13px;font-weight:400;color:#161616;transform:scaleX(0.8889);">IP-адреса</span><span class="t" style="left:58.4px;top:533.50px;font-size:13px;font-weight:400;color:#161616;transform:scaleX(0.9092);">Useragent браузеров</span><span class="t" style="left:58.4px;top:552.50px;font-size:13px;font-weight:400;color:#161616;transform:scaleX(0.8974);">Списки URL</span><span class="t" style="left:58.4px;top:571.50px;font-size:13px;font-weight:400;color:#161616;transform:scaleX(0.9212);">Календари</span><span class="t" style="left:58.4px;top:590.50px;font-size:13px;font-weight:400;color:#161616;transform:scaleX(0.9284);">Почтовые адреса</span><span class="t" style="left:58.4px;top:609.50px;font-size:13px;font-weight:400;color:#161616;transform:scaleX(0.9121);">Номера телефонов</span><span class="t" style="left:58.4px;top:628.50px;font-size:13px;font-weight:400;color:#161616;transform:scaleX(0.9245);">Профили оповещений</span><span class="t" style="left:58.4px;top:647.50px;font-size:13px;font-weight:400;color:#161616;transform:scaleX(0.9229);">Профили netflow</span><span class="t" style="left:58.4px;top:666.50px;font-size:13px;font-weight:400;color:#161616;transform:scaleX(0.8895);">Профили LLDP</span><span class="t" style="left:58.4px;top:685.50px;font-size:13px;font-weight:400;color:#161616;transform:scaleX(0.8750);">Профили SSL</span><span class="t" style="left:7px;top:807.00px;font-size:13px;font-weight:400;color:#161616;transform:scaleX(0.9429);">Только избранные</span><span class="t" style="left:250.5px;top:47.68px;font-size:14.5px;font-weight:700;color:#fff;transform:scaleX(0.9720);">Зоны</span><span class="t" style="left:274px;top:84.19px;font-size:11px;font-weight:700;color:#777;transform:scaleX(0.9572);">Добавить</span><span class="t" style="left:367px;top:84.19px;font-size:11px;font-weight:700;color:#b4b4b4;transform:scaleX(0.9725);">Редактировать</span><span class="t" style="left:474px;top:84.19px;font-size:11px;font-weight:700;color:#b4b4b4;transform:scaleX(0.9513);">Копировать</span><span class="t" style="left:578px;top:84.19px;font-size:11px;font-weight:700;color:#b4b4b4;transform:scaleX(0.9744);">Удалить</span><span class="t" style="left:251px;top:117.19px;font-size:11px;font-weight:700;color:#666;transform:scaleX(0.9479);">Зона</span><span class="t" style="left:401px;top:117.19px;font-size:11px;font-weight:700;color:#666;transform:scaleX(0.9587);">Защита от DoS включена для</span><span class="t" style="left:601px;top:117.19px;font-size:11px;font-weight:700;color:#666;transform:scaleX(0.9563);">Исключения</span><span class="t" style="left:701px;top:117.19px;font-size:11px;font-weight:700;color:#666;transform:scaleX(0.9552);">Защита от спуфинга</span><span class="t" style="left:901px;top:117.19px;font-size:11px;font-weight:700;color:#666;transform:scaleX(0.9533);">Контроль доступа</span><span class="t" style="left:251px;top:145.90px;font-size:13px;font-weight:400;color:#4a80c8;transform:scaleX(0.9052);">DMZ</span><span class="t" style="left:401px;top:145.90px;font-size:13px;font-weight:400;color:#4a80c8;transform:scaleX(0.8446);">SYN, UDP, ICMP</span><span class="t" style="left:251px;top:169.90px;font-size:13px;font-weight:400;color:#4a80c8;transform:scaleX(0.9290);">Management</span><span class="t" style="left:401px;top:169.90px;font-size:13px;font-weight:400;color:#4a80c8;transform:scaleX(0.8446);">SYN, UDP, ICMP</span><span class="t" style="left:251px;top:193.90px;font-size:13px;font-weight:400;color:#4a80c8;transform:scaleX(0.9290);">Trusted</span><span class="t" style="left:401px;top:193.90px;font-size:13px;font-weight:400;color:#4a80c8;transform:scaleX(0.8446);">SYN, UDP, ICMP</span><span class="t" style="left:251px;top:217.90px;font-size:13px;font-weight:400;color:#4a80c8;transform:scaleX(0.9135);">Untrusted</span><span class="t" style="left:401px;top:217.90px;font-size:13px;font-weight:400;color:#4a80c8;transform:scaleX(0.8446);">SYN, UDP, ICMP</span>
</div>
<div id="mask"></div>
<div id="win">
<div class="b" style="left:607px;top:127px;width:700px;height:600px;background:#47a3d8;border-radius:4px;box-shadow:0 1px 6px rgba(0,0,0,.34)"></div><div class="b" style="left:612px;top:163px;width:690px;height:559px;background:#fff"></div><svg style="left:1281px;top:137px" width="16" height="16" viewBox="0 0 16 16"><circle cx="8" cy="8" r="8" fill="#a6d4ec"/><path d="M4 4l8 8M12 4l-8 8" stroke="#47a3d8" stroke-width="1.8"/></svg><div class="b" style="left:622px;top:198px;width:670px;height:5px;background:#b3d9ef"></div><div class="b" style="left:622px;top:173px;width:48px;height:25px;background:#5aabdb;border-radius:3px 3px 0 0"></div><div class="b" style="left:623px;top:174px;width:46px;height:23px;border:1px solid #e6f2fa;border-radius:2px"></div><div class="b" style="left:672px;top:173px;width:112px;height:25px;background:#b3d9ef;border-radius:3px 3px 0 0"></div><div class="b" style="left:786px;top:173px;width:140px;height:25px;background:#5aabdb;border-radius:3px 3px 0 0"></div><div class="b" style="left:928px;top:173px;width:124px;height:25px;background:#5aabdb;border-radius:3px 3px 0 0"></div><div class="b" style="left:622px;top:208px;width:670px;height:468px;border:1px solid #2f94d6;background:#fff"></div><div class="b" style="left:623px;top:209px;width:668px;height:29px;background:#f5f5f5;border-bottom:1px solid #c0c0c0"></div><div class="b" style="left:647px;top:209px;width:1px;height:28px;background:#c0c0c0"></div><div class="b" style="left:969px;top:209px;width:1px;height:28px;background:#c0c0c0"></div><svg width="0" height="0" style="left:0;top:0"><defs><pattern id="hatch" width="3" height="3" patternUnits="userSpaceOnUse"><rect x="2" y="0" width="1" height="1" fill="#b8b8b8"/><rect x="1" y="1" width="1" height="1" fill="#b8b8b8"/><rect x="0" y="2" width="1" height="1" fill="#b8b8b8"/></pattern></defs></svg><div class="b" style="left:623px;top:263px;width:668px;height:1px;background:#ededed"></div><div class="b" style="left:629px;top:245px;width:13px;height:13px;border:1px solid #b4b4b4;border-radius:2px;background:linear-gradient(#fff,#ebebeb);box-shadow:0 1px 0 rgba(0,0,0,.06)"></div><svg style="left:628px;top:242px" width="16" height="16" viewBox="0 0 16 16"><path d="M2.2 9.2l3.3 3.2L14.4 2.9" fill="none" stroke="#5a5a5a" stroke-width="1.55"/></svg><div class="b" style="left:623px;top:288px;width:668px;height:1px;background:#ededed"></div><svg style="left:623px;top:264px" width="668" height="24" shape-rendering="crispEdges"><rect width="668" height="24" fill="url(#hatch)"/></svg><div class="b" style="left:629px;top:270px;width:13px;height:13px;border:1px solid #b4b4b4;border-radius:2px;background:linear-gradient(#fff,#ebebeb);box-shadow:0 1px 0 rgba(0,0,0,.06)"></div><div class="b" style="left:623px;top:314px;width:668px;height:1px;background:#ededed"></div><div class="b" style="left:629px;top:295px;width:13px;height:13px;border:1px solid #b4b4b4;border-radius:2px;background:linear-gradient(#fff,#ebebeb);box-shadow:0 1px 0 rgba(0,0,0,.06)"></div><svg style="left:628px;top:292px" width="16" height="16" viewBox="0 0 16 16"><path d="M2.2 9.2l3.3 3.2L14.4 2.9" fill="none" stroke="#5a5a5a" stroke-width="1.55"/></svg><svg style="left:981px;top:295px" width="14" height="14" viewBox="0 0 14 14"><rect x="0.5" y="0" width="9.5" height="12.5" rx="1.5" fill="#a7b7bf"/><rect x="2" y="2.5" width="6.5" height="1.6" fill="#fff"/><rect x="2" y="5.5" width="4.5" height="1.6" fill="#fff"/><path d="M6.5 10.3l2.2 2.3L13.6 8" fill="none" stroke="#12ab3c" stroke-width="2"/></svg><div class="b" style="left:623px;top:315px;width:668px;height:25px;background:#fafafa"></div><div class="b" style="left:623px;top:340px;width:668px;height:1px;background:#ededed"></div><div class="b" style="left:629px;top:321px;width:13px;height:13px;border:1px solid #b4b4b4;border-radius:2px;background:linear-gradient(#fff,#ebebeb);box-shadow:0 1px 0 rgba(0,0,0,.06)"></div><svg style="left:628px;top:318px" width="16" height="16" viewBox="0 0 16 16"><path d="M2.2 9.2l3.3 3.2L14.4 2.9" fill="none" stroke="#5a5a5a" stroke-width="1.55"/></svg><svg style="left:981px;top:321px" width="14" height="14" viewBox="0 0 14 14"><rect x="0.5" y="0" width="9.5" height="12.5" rx="1.5" fill="#a7b7bf"/><rect x="2" y="2.5" width="6.5" height="1.6" fill="#fff"/><rect x="2" y="5.5" width="4.5" height="1.6" fill="#fff"/><path d="M6.5 10.3l2.2 2.3L13.6 8" fill="none" stroke="#12ab3c" stroke-width="2"/></svg><div class="b" style="left:623px;top:365px;width:668px;height:1px;background:#ededed"></div><div class="b" style="left:629px;top:347px;width:13px;height:13px;border:1px solid #b4b4b4;border-radius:2px;background:linear-gradient(#fff,#ebebeb);box-shadow:0 1px 0 rgba(0,0,0,.06)"></div><svg style="left:628px;top:344px" width="16" height="16" viewBox="0 0 16 16"><path d="M2.2 9.2l3.3 3.2L14.4 2.9" fill="none" stroke="#5a5a5a" stroke-width="1.55"/></svg><div class="b" style="left:623px;top:390px;width:668px;height:1px;background:#ededed"></div><svg style="left:623px;top:366px" width="668" height="24" shape-rendering="crispEdges"><rect width="668" height="24" fill="url(#hatch)"/></svg><div class="b" style="left:629px;top:372px;width:13px;height:13px;border:1px solid #b4b4b4;border-radius:2px;background:linear-gradient(#fff,#ebebeb);box-shadow:0 1px 0 rgba(0,0,0,.06)"></div><div class="b" style="left:623px;top:415px;width:668px;height:1px;background:#ededed"></div><svg style="left:623px;top:391px" width="668" height="24" shape-rendering="crispEdges"><rect width="668" height="24" fill="url(#hatch)"/></svg><div class="b" style="left:629px;top:397px;width:13px;height:13px;border:1px solid #b4b4b4;border-radius:2px;background:linear-gradient(#fff,#ebebeb);box-shadow:0 1px 0 rgba(0,0,0,.06)"></div><div class="b" style="left:1140px;top:692px;width:75px;height:24px;background:#4aa5d9;border:1px solid #2e86c5;border-radius:3px"></div><div class="b" style="left:1221px;top:692px;width:75px;height:24px;background:#4aa5d9;border:1px solid #2e86c5;border-radius:3px"></div>
<span class="t" style="left:617.4px;top:135.70px;font-size:13px;font-weight:700;color:#fff;transform:scaleX(0.8752);">Свойства сетевой зоны</span><span class="t" style="left:627.4px;top:176.84px;font-size:12px;font-weight:700;color:#fff;transform:scaleX(0.9433);">Общие</span><span class="t" style="left:677.4px;top:176.84px;font-size:12px;font-weight:700;color:#2e8fd4;transform:scaleX(0.9456);">Контроль доступа</span><span class="t" style="left:791.4px;top:176.84px;font-size:12px;font-weight:700;color:#fff;transform:scaleX(0.9575);">Защита от IP-спуфинга</span><span class="t" style="left:933px;top:176.84px;font-size:12px;font-weight:700;color:#fff;transform:scaleX(0.9385);">Ограничение сессий</span><span class="t" style="left:658.3px;top:212.99px;font-size:11px;font-weight:700;color:#555;transform:scaleX(0.9504);">Разрешённые сервисы</span><span class="t" style="left:980.3px;top:212.99px;font-size:11px;font-weight:700;color:#555;transform:scaleX(0.9610);">Разрешённые адреса</span><span class="t" style="left:658.4px;top:241.50px;font-size:13px;font-weight:400;color:#000;transform:scaleX(0.8912);">Ping</span><span class="t" style="left:980.3px;top:241.50px;font-size:13px;font-weight:400;color:#3a7bc3;transform:scaleX(0.9523);">Любой</span><span class="t" style="left:658.4px;top:267.00px;font-size:13px;font-weight:400;color:#000;transform:scaleX(0.8945);">SNMP</span><span class="t" style="left:980.3px;top:267.00px;font-size:13px;font-weight:400;color:#3f5473;transform:scaleX(0.9523);opacity:.74;">Любой</span><span class="t" style="left:658.4px;top:291.50px;font-size:13px;font-weight:400;color:#000;transform:scaleX(0.9495);">Консоль администрирования</span><span class="t" style="left:999px;top:292.50px;font-size:13px;font-weight:400;color:#3a7bc3;transform:scaleX(0.9366);">Список доверенных IP</span><span class="t" style="left:658.4px;top:317.50px;font-size:13px;font-weight:400;color:#000;transform:scaleX(0.8721);">CLI по SSH</span><span class="t" style="left:999px;top:318.50px;font-size:13px;font-weight:400;color:#3a7bc3;transform:scaleX(0.9366);">Список доверенных IP</span><span class="t" style="left:658.4px;top:344.00px;font-size:13px;font-weight:400;color:#000;transform:scaleX(0.9100);">Reverse-прокси</span><span class="t" style="left:980.3px;top:344.00px;font-size:13px;font-weight:400;color:#3a7bc3;transform:scaleX(0.9523);">Любой</span><span class="t" style="left:658.4px;top:369.00px;font-size:13px;font-weight:400;color:#000;transform:scaleX(0.9255);">SNMP-прокси</span><span class="t" style="left:980.3px;top:369.00px;font-size:13px;font-weight:400;color:#3f5473;transform:scaleX(0.9523);opacity:.74;">Любой</span><span class="t" style="left:658.4px;top:394.00px;font-size:13px;font-weight:400;color:#000;transform:scaleX(0.9195);">NTP сервис</span><span class="t" style="left:980.3px;top:394.00px;font-size:13px;font-weight:400;color:#3f5473;transform:scaleX(0.9523);opacity:.74;">Любой</span><span class="t" style="left:1150.2px;top:694.14px;font-size:12px;font-weight:700;color:#fff;transform:scaleX(0.8527);">Сохранить</span><span class="t" style="left:1238.8px;top:694.14px;font-size:12px;font-weight:700;color:#fff;transform:scaleX(0.8839);">Отмена</span>
</div>
</body></html>
